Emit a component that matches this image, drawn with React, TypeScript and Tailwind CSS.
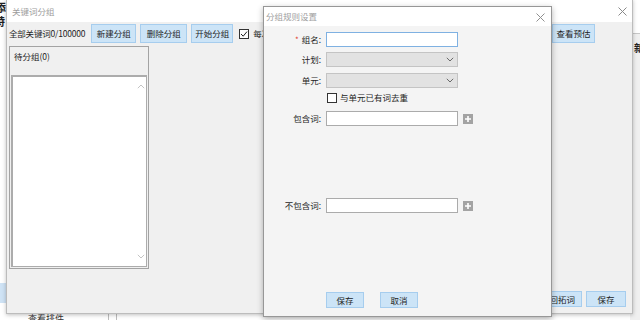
import React from "react";

function Chevron({ dir = "down", className = "" }: { dir?: "up" | "down"; className?: string }) {
  return (
    <svg width="8" height="5" viewBox="0 0 8 5" className={className}>
      <path
        d={dir === "down" ? "M0.8 0.8 L4 4 L7.2 0.8" : "M0.8 4.2 L4 1 L7.2 4.2"}
        fill="none"
        stroke="currentColor"
        strokeWidth="1"
      />
    </svg>
  );
}

function CloseX({ className = "" }: { className?: string }) {
  return (
    <svg width="9" height="9" viewBox="0 0 9 9" className={className}>
      <path d="M0.5 0.5 L8.5 8.5 M8.5 0.5 L0.5 8.5" stroke="currentColor" strokeWidth="1" />
    </svg>
  );
}

function BlueButton({ children, className = "" }: { children: React.ReactNode; className?: string }) {
  return (
    <div
      className={`flex items-center justify-center bg-[#cce4f7] border border-[#a6cdee] text-[#1e1e1e] ${className}`}
    >
      {children}
    </div>
  );
}

function PlusBox() {
  return (
    <div className="ml-[5px] w-[10px] h-[10px] bg-[#a3a3a3] flex items-center justify-center">
      <svg width="6" height="6" viewBox="0 0 6 6">
        <path d="M3 0 V6 M0 3 H6" stroke="#fff" strokeWidth="1.6" />
      </svg>
    </div>
  );
}

function Backdrop() {
  return (
    <>
      {/* left edge of the app behind */}
      <div className="absolute left-[-5px] top-[2px] text-[11px] font-bold text-[#222]">添</div>
      <div className="absolute left-[-6px] top-[16px] text-[11px] font-bold text-[#222]">特</div>
      <div className="absolute left-0 top-[283px] w-[8px] h-[20px] bg-[#cfe3f5]" />
      {/* bottom strip */}
      <div className="absolute left-[28px] top-[314px] text-[9px] text-[#333]">查看排件</div>
      <div className="absolute left-[108px] top-[312px] w-px h-[8px] bg-[#bdbdbd]" />
      <div className="absolute left-[116px] top-[312px] w-px h-[8px] bg-[#bdbdbd]" />
      {/* right strip */}
      <div className="absolute left-[630px] top-[33px] w-[10px] h-[287px] bg-[#f0f0f0] border-t border-[#c8c8c8]" />
      <div className="absolute left-[634px] top-[43px] text-[10px] font-bold text-[#222]">新</div>
    </>
  );
}

function KeywordWindow() {
  return (
    <div className="absolute left-[6px] top-[-1px] w-[627px] h-[315px] bg-[#f0f0f0] border border-[#bcbcbc] shadow-[0_1px_4px_rgba(0,0,0,0.25)] flex flex-col">
      <div className="h-[22px] bg-white flex items-center justify-between pl-[5px] pr-[5px] text-[#9c9c9c] shrink-0">
        <span>关键词分组</span>
        <CloseX className="text-[#8a8a8a]" />
      </div>

      <div className="mt-[2px] h-[19px] flex items-center pl-[2px] shrink-0">
        <span className="tracking-[-0.2px]">全部关键词0/100000</span>
        <BlueButton className="ml-[6px] w-[45px] h-[19px]">新建分组</BlueButton>
        <BlueButton className="ml-[4px] w-[47px] h-[19px]">删除分组</BlueButton>
        <BlueButton className="ml-[4px] w-[42px] h-[19px]">开始分组</BlueButton>
        <div className="ml-[6px] w-[10px] h-[10px] border border-[#333] bg-white flex items-center justify-center">
          <svg width="8" height="8" viewBox="0 0 8 8">
            <path d="M1 4 L3.2 6.2 L7 1.6" fill="none" stroke="#222" strokeWidth="1" />
          </svg>
        </div>
        <span className="ml-[4px]">每次分组前清空</span>
        <BlueButton className="ml-auto mr-[37px] w-[43px] h-[19px]">查看预估</BlueButton>
      </div>

      <div className="ml-[2px] mt-[3px] w-[140px] h-[223px] border border-[#a3a3a3] flex flex-col shrink-0">
        <div className="h-[28px] pl-[4px] pt-[5px] shrink-0">待分组(0)</div>
        <div className="ml-[1px] mr-[1px] mb-px flex-1 bg-white border border-[#acacac] border-t-2 border-l-2 flex justify-end">
          <div className="w-[10px] flex flex-col items-center justify-between py-[7px] text-[#c4c4c4]">
            <Chevron dir="up" />
            <Chevron dir="down" />
          </div>
        </div>
      </div>

      <div className="flex-1" />

      <div className="flex justify-end gap-[4px] pr-[6px] pb-[6px] shrink-0">
        <BlueButton className="w-[48px] h-[16px]">推回拓词</BlueButton>
        <BlueButton className="w-[40px] h-[16px]">保存</BlueButton>
      </div>
    </div>
  );
}

function FieldRow({
  label,
  star = false,
  children,
  className = "",
}: {
  label: string;
  star?: boolean;
  children: React.ReactNode;
  className?: string;
}) {
  return (
    <div className={`flex items-center ${className}`}>
      <div className="w-[58px] flex justify-end items-center pr-px">
        {star && <span className="text-[#e0402f] mr-[3px] text-[8px]">*</span>}
        <span>{label}</span>
      </div>
      <div className="ml-[4px] flex items-center">{children}</div>
    </div>
  );
}

function SelectBox() {
  return (
    <div className="w-[132px] h-[15px] bg-[#e2e2e2] border border-[#c4c4c4] flex items-center justify-end pr-[3px] text-[#6a6a6a]">
      <Chevron dir="down" />
    </div>
  );
}

function RuleDialog() {
  return (
    <div className="absolute left-[263px] top-[6px] w-[289px] h-[311px] bg-[#f4f4f4] border border-[#979797] shadow-[0_2px_6px_rgba(0,0,0,0.3)] flex flex-col">
      <div className="h-[19px] bg-white flex items-center justify-between pl-[2px] pr-[6px] text-[#a0a0a0] shrink-0">
        <span>分组规则设置</span>
        <CloseX className="text-[#909090] mt-[1px]" />
      </div>

      <FieldRow label="组名:" star className="mt-[6px]">
        <div className="w-[132px] h-[15px] bg-white border border-[#7fb1e2]" />
      </FieldRow>
      <FieldRow label="计划:" className="mt-[5px]">
        <SelectBox />
      </FieldRow>
      <FieldRow label="单元:" className="mt-[6px]">
        <SelectBox />
      </FieldRow>
      <div className="mt-[4px] ml-[63px] flex items-center h-[11px]">
        <div className="w-[10px] h-[10px] border border-[#333] bg-white" />
        <span className="ml-[3px]">与单元已有词去重</span>
      </div>
      <FieldRow label="包含词:" className="mt-[8px]">
        <div className="w-[132px] h-[15px] bg-white border border-[#ababab]" />
        <PlusBox />
      </FieldRow>
      <FieldRow label="不包含词:" className="mt-[72px]">
        <div className="w-[132px] h-[15px] bg-white border border-[#ababab]" />
        <PlusBox />
      </FieldRow>

      <div className="mt-[79px] ml-[62px] flex gap-[16px]">
        <BlueButton className="w-[38px] h-[16px]">保存</BlueButton>
        <BlueButton className="w-[38px] h-[16px]">取消</BlueButton>
      </div>
    </div>
  );
}

export default function App() {
  return (
    <div className="relative w-[640px] h-[320px] overflow-hidden bg-white font-['Noto_Sans_CJK_SC','Noto_Sans',sans-serif] text-[8.5px] leading-none text-[#1e1e1e]">
      <Backdrop />
      <KeywordWindow />
      <RuleDialog />
    </div>
  );
}
